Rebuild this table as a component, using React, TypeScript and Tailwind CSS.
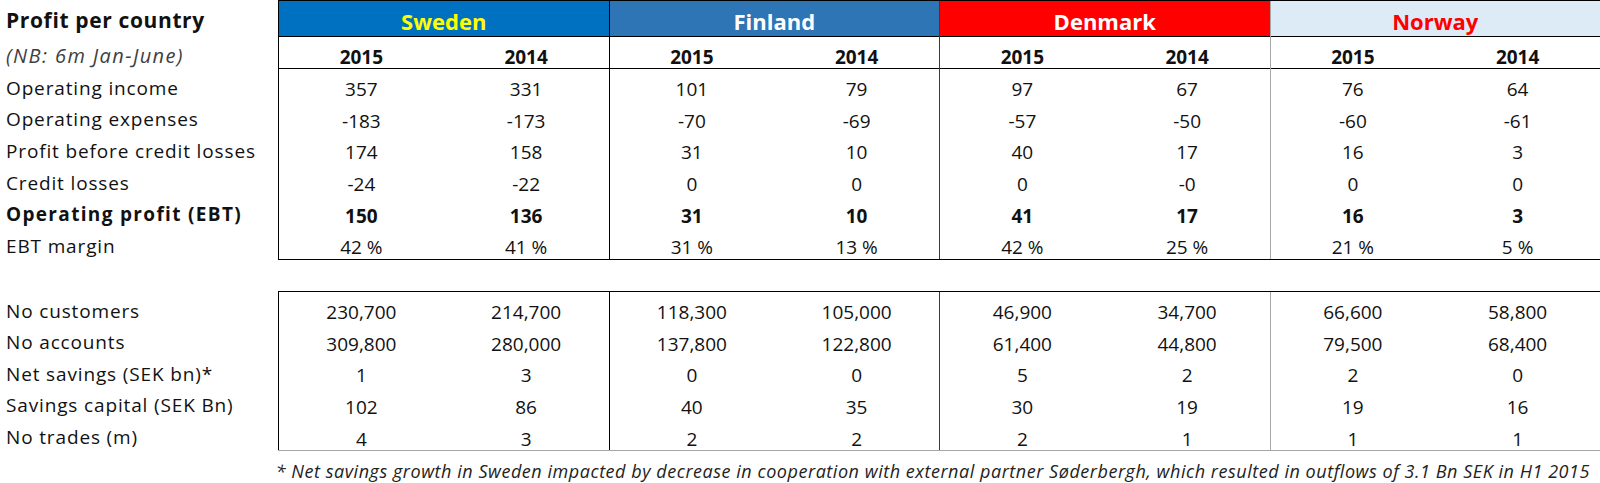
import clsx from "clsx";

type Country = {
  name: string;
  header: string;
  divider: string;
  profit: [string, string][];
  volume: [string, string][];
};

const PROFIT_LABELS = [
  "Operating income",
  "Operating expenses",
  "Profit before credit losses",
  "Credit losses",
  "Operating profit (EBT)",
  "EBT margin",
];

const VOLUME_LABELS = [
  "No customers",
  "No accounts",
  "Net savings (SEK bn)*",
  "Savings capital (SEK Bn)",
  "No trades (m)",
];

const BOLD_ROW = 4;

const COUNTRIES: Country[] = [
  {
    name: "Sweden",
    header: "bg-[#0070c0] text-[#ffff00]",
    divider: "border-black",
    profit: [
      ["357", "331"],
      ["-183", "-173"],
      ["174", "158"],
      ["-24", "-22"],
      ["150", "136"],
      ["42 %", "41 %"],
    ],
    volume: [
      ["230,700", "214,700"],
      ["309,800", "280,000"],
      ["1", "3"],
      ["102", "86"],
      ["4", "3"],
    ],
  },
  {
    name: "Finland",
    header: "bg-[#2e75b6] text-white",
    divider: "border-black",
    profit: [
      ["101", "79"],
      ["-70", "-69"],
      ["31", "10"],
      ["0", "0"],
      ["31", "10"],
      ["31 %", "13 %"],
    ],
    volume: [
      ["118,300", "105,000"],
      ["137,800", "122,800"],
      ["0", "0"],
      ["40", "35"],
      ["2", "2"],
    ],
  },
  {
    name: "Denmark",
    header: "bg-[#ff0000] text-white",
    divider: "border-[#3a3a3a]",
    profit: [
      ["97", "67"],
      ["-57", "-50"],
      ["40", "17"],
      ["0", "-0"],
      ["41", "17"],
      ["42 %", "25 %"],
    ],
    volume: [
      ["46,900", "34,700"],
      ["61,400", "44,800"],
      ["5", "2"],
      ["30", "19"],
      ["2", "1"],
    ],
  },
  {
    name: "Norway",
    header: "bg-[#ddebf7] text-[#ff0000]",
    divider: "border-[#a6a6a6]",
    profit: [
      ["76", "64"],
      ["-60", "-61"],
      ["16", "3"],
      ["0", "0"],
      ["16", "3"],
      ["21 %", "5 %"],
    ],
    volume: [
      ["66,600", "58,800"],
      ["79,500", "68,400"],
      ["2", "0"],
      ["19", "16"],
      ["1", "1"],
    ],
  },
];

function ValueRow({ values, bold }: { values: [string, string]; bold?: boolean }) {
  return (
    <div
      className={clsx(
        "grid h-[31.67px] grid-cols-2 items-center pt-[6px] text-center",
        bold && "font-bold"
      )}
    >
      <span>{values[0]}</span>
      <span>{values[1]}</span>
    </div>
  );
}

function LabelRow({ label, bold }: { label: string; bold?: boolean }) {
  return (
    <div
      className={clsx(
        "flex h-[31.67px] items-center pt-[6px] pl-[6px] whitespace-nowrap",
        bold ? "font-bold tracking-[0.07em]" : "tracking-[0.045em]"
      )}
    >
      {label}
    </div>
  );
}

export default function App() {
  return (
    <div className="h-[483px] w-[1600px] overflow-hidden bg-white font-['Open_Sans',sans-serif] text-[19px] text-[#111]">
      {/* profit table */}
      <div className="flex">
        <div className="w-[278px] shrink-0">
          <div className="flex h-[37px] items-center pt-[5px] pl-[6px] text-[21px] font-bold tracking-[0.03em]">
            Profit per country
          </div>
          <div className="flex h-[32px] items-center pt-[6px] pl-[6px] text-[20px] italic tracking-[0.07em] text-[#404040]">
            (NB: 6m Jan-June)
          </div>
          {PROFIT_LABELS.map((label, i) => (
            <LabelRow key={label} label={label} bold={i === BOLD_ROW} />
          ))}
        </div>
        <div className="flex flex-1 border-y border-black">
          {COUNTRIES.map((c) => (
            <div key={c.name} className={clsx("flex flex-1 flex-col border-l", c.divider)}>
              <div
                className={clsx(
                  "flex h-[35px] items-center justify-center pt-[5px] text-[22px] font-bold",
                  c.header
                )}
              >
                {c.name}
              </div>
              <div className="grid h-[33px] grid-cols-2 items-center border-y border-black pt-[6px] text-center font-bold">
                <span>2015</span>
                <span>2014</span>
              </div>
              {c.profit.map((v, i) => (
                <ValueRow key={i} values={v} bold={i === BOLD_ROW} />
              ))}
            </div>
          ))}
        </div>
      </div>

      {/* volume table */}
      <div className="mt-[31px] flex">
        <div className="w-[278px] shrink-0 pt-px">
          {VOLUME_LABELS.map((label) => (
            <LabelRow key={label} label={label} />
          ))}
        </div>
        <div className="flex flex-1 border-t border-b border-t-black border-b-[#a6a6a6]">
          {COUNTRIES.map((c) => (
            <div key={c.name} className={clsx("flex flex-1 flex-col border-l", c.divider)}>
              {c.volume.map((v, i) => (
                <ValueRow key={i} values={v} />
              ))}
            </div>
          ))}
        </div>
      </div>

      <p className="pt-[7px] pr-[10px] text-right text-[18px] italic tracking-[0.03em] text-[#222]">
        * Net savings growth in Sweden impacted by decrease in cooperation with external partner Søderbergh,
        which resulted in outflows of 3.1 Bn SEK in H1 2015
      </p>
    </div>
  );
}
